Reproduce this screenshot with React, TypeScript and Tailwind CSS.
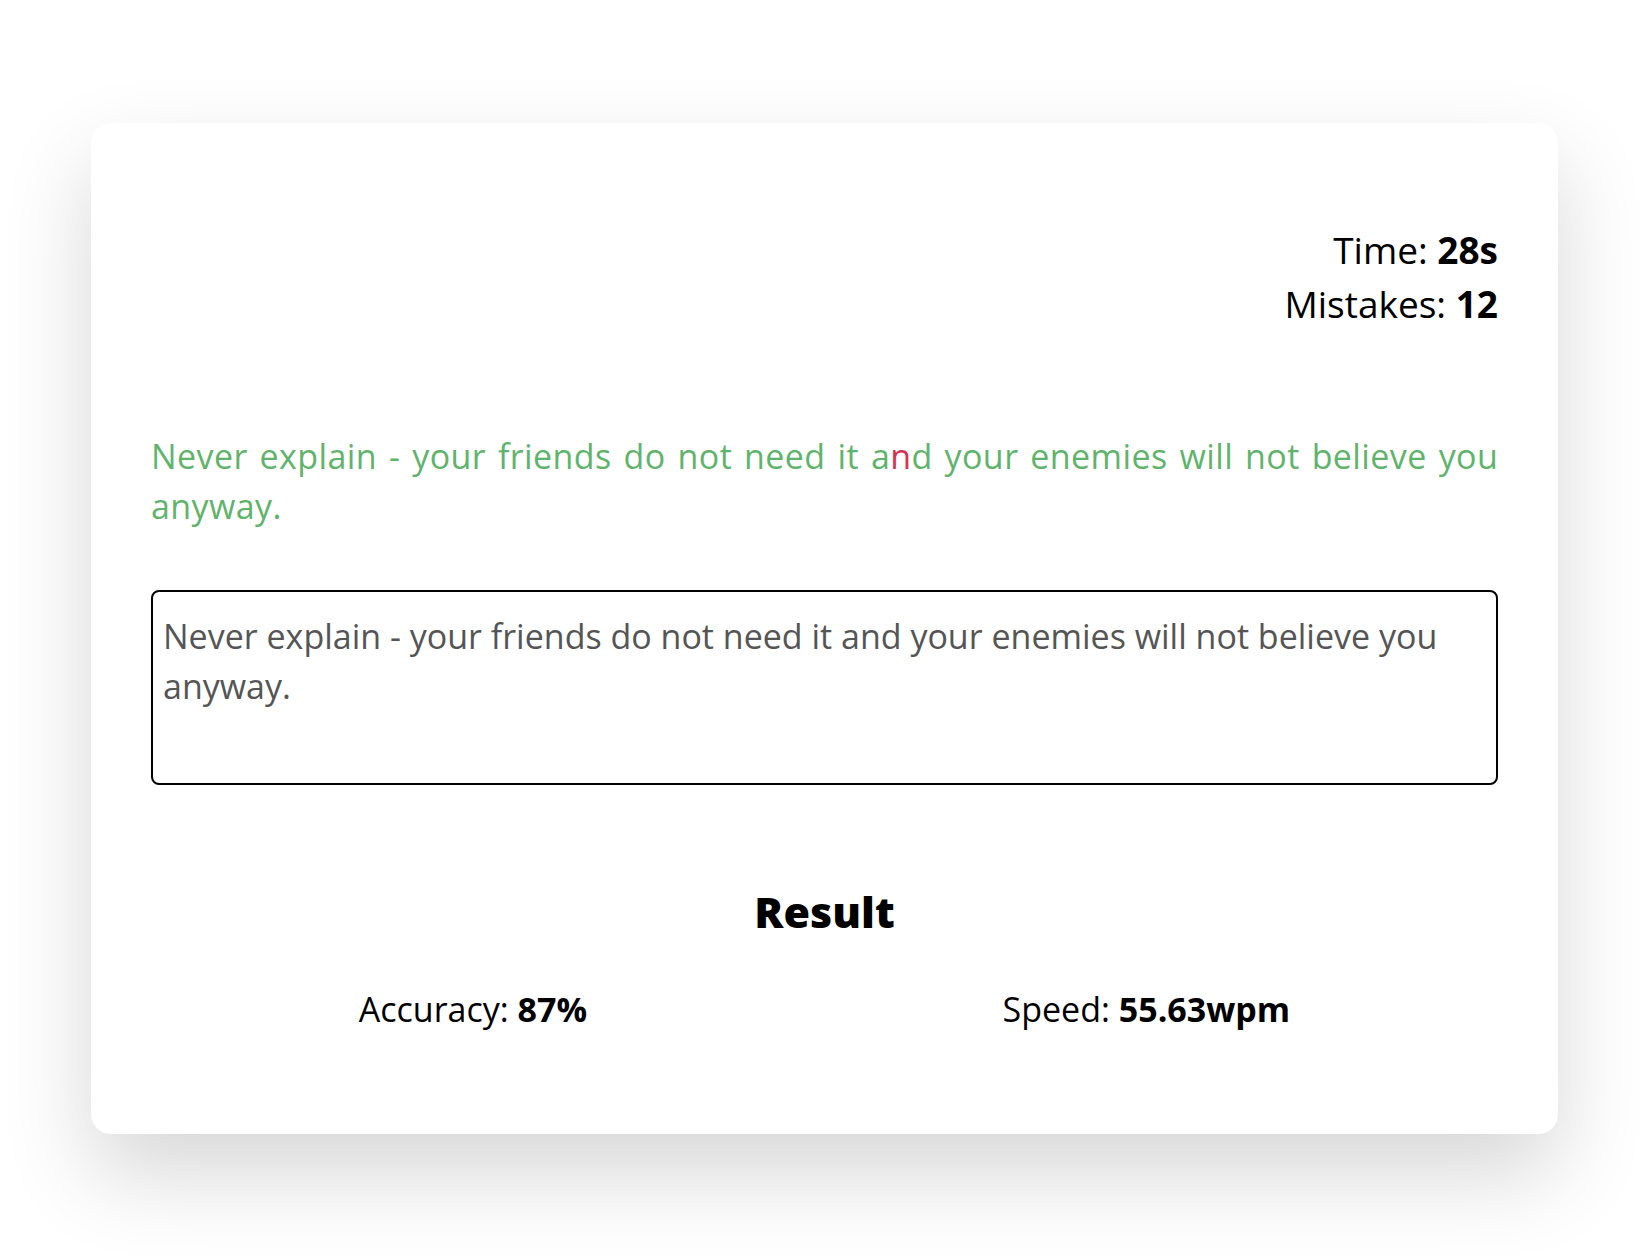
const quote = 'Never explain - your friends do not need it and your enemies will not believe you anyway.';
const wrongIndex = 45; // the "n" in "and"

export default function App() {
  return (
    <div
      className="min-h-[1256px] w-full bg-white pl-[91px] pt-[123px]"
      style={{ fontFamily: '"Open Sans", "Liberation Sans", sans-serif' }}
    >
      <div className="w-[1467px] h-[1011px] rounded-[20px] bg-white px-[60px] pt-[100px] shadow-[0_40px_90px_rgba(0,0,0,0.16)]">
        <div className="flex flex-col items-end text-[37px] leading-[54px] text-black">
          <div>
            Time: <span className="font-bold">28s</span>
          </div>
          <div>
            Mistakes: <span className="font-bold">12</span>
          </div>
        </div>

        <p className="mt-[100px] text-justify text-[34px] leading-[50px] tracking-[0.4px] text-[#5fb46c]">
          {quote.split('').map((ch, i) => (
            <span key={i} className={i === wrongIndex ? 'text-[#d8314f]' : ''}>
              {ch}
            </span>
          ))}
        </p>

        <textarea
          readOnly
          defaultValue={quote}
          className="mt-[59px] block h-[195px] w-full resize-none rounded-[8px] border-2 border-black px-[10px] pt-[19px] text-[34px] leading-[50px] text-[#555555] outline-none"
          style={{ fontFamily: '"Open Sans", "Liberation Sans", sans-serif' }}
        />

        <h2 className="mt-[102px] text-center text-[43px] leading-[50px] font-extrabold text-black">Result</h2>

        <div className="mt-[48px] flex justify-around text-[34px] leading-[48px] text-black">
          <div>
            Accuracy: <span className="font-bold">87%</span>
          </div>
          <div>
            Speed: <span className="font-bold">55.63wpm</span>
          </div>
        </div>
      </div>
    </div>
  );
}
